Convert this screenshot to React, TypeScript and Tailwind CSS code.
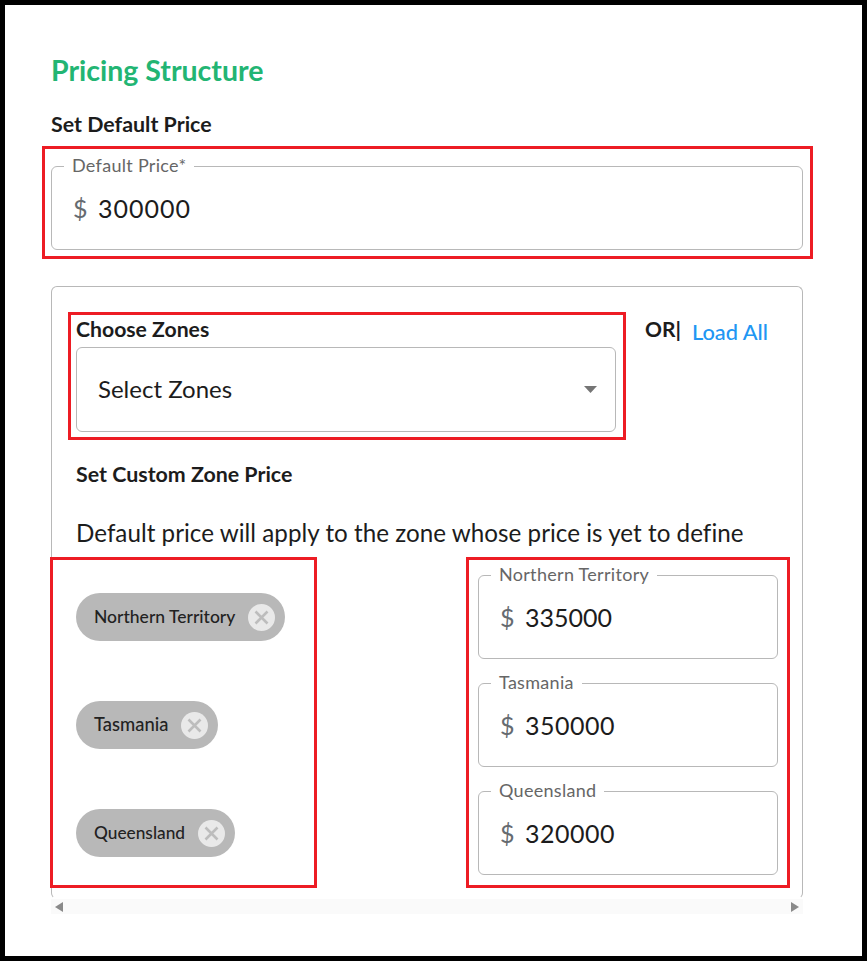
const font = "font-['Lato','Noto_Sans',sans-serif]";

function PriceField({ label, value, className, valueClass }: { label: string; value: string; className?: string; valueClass: string }) {
  return (
    <div className={`relative h-[84px] rounded-[6px] border border-[#b8b8b8] bg-white ${className ?? ""}`}>
      <span className="absolute left-[12px] top-[-12px] bg-white px-[8px] text-[18px] leading-[20px] tracking-[0.3px] text-[#666666]">{label}</span>
      <div className="flex h-full items-center pl-[21px]">
        <span className="w-[25px] text-[25px] font-normal leading-[32px] text-[#666b70]">$</span>
        <span className={`text-[25px] leading-[32px] text-[#1c1c1c] ${valueClass}`}>{value}</span>
      </div>
    </div>
  );
}

function Chip({ label, textClass }: { label: string; textClass: string }) {
  return (
    <div className="flex h-[48px] w-fit items-center rounded-full bg-[#b8b8b8] pl-[18px] pr-[10px]">
      <span className={`font-medium text-[#222222] ${textClass}`}>{label}</span>
      <span className="ml-[13px] flex h-[27px] w-[27px] items-center justify-center rounded-full bg-[#e9e9e9]">
        <svg width="15" height="15" viewBox="0 0 15 15" fill="none" stroke="#bdbdbd" strokeWidth="2.6">
          <path d="M1.5 1.5 13.5 13.5M13.5 1.5 1.5 13.5" />
        </svg>
      </span>
    </div>
  );
}

function RedBox({ className }: { className: string }) {
  return <div className={`pointer-events-none absolute border-[3px] border-[#ed1c24] ${className}`} />;
}

const zones = [
  { name: "Northern Territory", price: "335000", valueClass: "tracking-[0px]", chipClass: "text-[17.5px]" },
  { name: "Tasmania", price: "350000", valueClass: "tracking-[0.5px]", chipClass: "text-[18.4px]" },
  { name: "Queensland", price: "320000", valueClass: "tracking-[0.5px]", chipClass: "text-[17.3px]" },
];

export default function App() {
  return (
    <div className={`relative h-[961px] w-[867px] overflow-hidden border-[5px] border-black bg-white pl-[46px] pr-[59px] pt-[46px] ${font}`}>
      <h1 className="text-[28.5px] font-bold leading-[38px] text-[#22b573]">Pricing Structure</h1>
      <h2 className="mt-[23px] text-[21.4px] font-bold leading-[24px] text-[#1c1c1c]">Set Default Price</h2>
      <PriceField className="mt-[30px]" label="Default Price*" value="300000" valueClass="tracking-[1px]" />

      <div className="mt-[36px] h-[613px] rounded-[6px] border border-[#b8b8b8] border-b-transparent pl-[24px] pr-[24px] pt-[30px]">
        <div className="flex">
          <div className="w-[540px] shrink-0">
            <div className="text-[21.2px] font-bold leading-[24px] text-[#1c1c1c]">Choose Zones</div>
            <div className="mt-[6px] flex h-[85px] items-center justify-between rounded-[6px] border border-[#b8b8b8] pl-[21px] pr-[18px]">
              <span className="mb-[2px] text-[24px] leading-[32px] text-[#1c1c1c]">Select Zones</span>
              <svg width="13" height="7" viewBox="0 0 13 7" fill="#757575"><path d="M0 0h13L6.5 7z" /></svg>
            </div>
          </div>
          <div className="ml-[29px] flex h-[24px] items-center">
            <span className="text-[21px] font-bold text-[#1c1c1c]">OR|</span>
            <span className="ml-[11px] mt-[6px] text-[21.8px] font-medium text-[#2196f3]">Load All</span>
          </div>
        </div>

        <div className="mt-[30px] text-[21.4px] font-bold leading-[24px] text-[#1c1c1c]">Set Custom Zone Price</div>
        <p className="mt-[31px] text-[24.2px] leading-[32px] tracking-[0.03px] text-[#1c1c1c]">Default price will apply to the zone whose price is yet to define</p>

        <div className="mt-[26px] flex justify-between">
          <div className="flex flex-col gap-[60px] pt-[18px]">
            {zones.map((z) => <Chip key={z.name} label={z.name} textClass={z.chipClass} />)}
          </div>
          <div className="flex w-[300px] flex-col gap-[24px]">
            {zones.map((z) => <PriceField key={z.name} label={z.name} value={z.price} valueClass={z.valueClass} />)}
          </div>
        </div>
      </div>

      <div className="flex h-[15px] items-center justify-between bg-[#fafafa] px-[4px]">
        <svg width="8" height="10" viewBox="0 0 8 10" fill="#8a8a8a"><path d="M8 0v10L0 5z" /></svg>
        <svg width="8" height="10" viewBox="0 0 8 10" fill="#8a8a8a"><path d="M0 0v10l8-5z" /></svg>
      </div>

      <RedBox className="left-[37px] top-[141px] h-[113px] w-[771px]" />
      <RedBox className="left-[63px] top-[307px] h-[128px] w-[558px]" />
      <RedBox className="left-[45px] top-[552px] h-[331px] w-[267px]" />
      <RedBox className="left-[461px] top-[552px] h-[331px] w-[324px]" />
    </div>
  );
}
